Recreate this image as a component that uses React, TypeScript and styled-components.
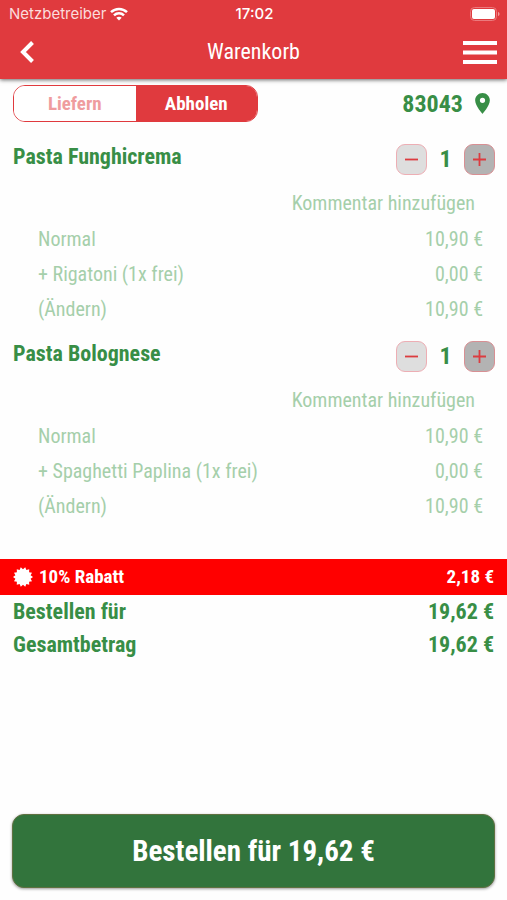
import React, { useState } from "react";
import styled, { createGlobalStyle, css } from "styled-components";

const red = "#e03a3e";
const green = "#388e46";
const paleGreen = "#a5cfaa";

const GlobalStyle = createGlobalStyle`
  *, *::before, *::after { box-sizing: border-box; }
  body {
    margin: 0;
    background: #fefefe;
    font-family: "Roboto Condensed", Roboto, sans-serif;
  }
  button { font-family: inherit; cursor: pointer; }
`;

const Page = styled.div`
  min-height: 100vh;
  display: flex;
  flex-direction: column;
`;

const Header = styled.header`
  background: ${red};
  color: #fff;
  box-shadow: 0 1px 4px rgba(0, 0, 0, 0.6);
`;

const StatusBar = styled.div`
  display: grid;
  grid-template-columns: 1fr auto 1fr;
  align-items: center;
  height: 27px;
  padding: 0 7px 0 9px;
  font: 400 15px/20px Inter, sans-serif;
`;

const Carrier = styled.span`
  display: flex;
  align-items: center;
  gap: 4px;
  color: #fbdcdc;
`;

const Clock = styled.time`
  font-weight: 500;
`;

const Battery = styled.svg`
  justify-self: end;
`;

const NavBar = styled.div`
  display: grid;
  grid-template-columns: 1fr auto 1fr;
  align-items: center;
  height: 50px;
  margin-bottom: 2px;
  padding: 0 10px;
`;

const Title = styled.h1`
  margin: 0;
  font-size: 22px;
  line-height: 28px;
  font-weight: 400;
`;

const IconButton = styled.button<{ $end?: boolean }>`
  display: flex;
  padding: 0;
  border: 0;
  background: none;
  color: inherit;
  justify-self: ${(p) => (p.$end ? "end" : "start")};
`;

const Toolbar = styled.div`
  display: flex;
  align-items: center;
  justify-content: space-between;
  padding: 6px 13px 0;
`;

const Segments = styled.div`
  display: flex;
  width: 245px;
  height: 37px;
  overflow: hidden;
  border: 1px solid ${red};
  border-radius: 12px;
`;

const Segment = styled.button<{ $active: boolean }>`
  flex: 1;
  padding: 0;
  border: 0;
  font-size: 19px;
  line-height: 24px;
  font-weight: 700;
  background: ${(p) => (p.$active ? red : "#fff")};
  color: ${(p) => (p.$active ? "#fff" : "#ef9c9e")};
`;

const Postcode = styled.button`
  display: flex;
  align-items: center;
  gap: 12px;
  padding: 0 4px;
  border: 0;
  background: none;
  color: ${green};
  font-size: 24px;
  line-height: 28px;
  font-weight: 700;
`;

const Items = styled.main`
  padding: 8px 12px 35px 13px;
`;

const ItemHeader = styled.div`
  display: flex;
  align-items: center;
  justify-content: space-between;
  height: 55px;
  padding-top: 3px;
`;

const ItemName = styled.h2`
  margin: 0;
  padding-bottom: 4px;
  color: ${green};
  font-size: 22px;
  line-height: 28px;
  font-weight: 700;
`;

const Stepper = styled.div`
  display: flex;
  align-items: center;
`;

const StepButton = styled.button<{ $muted?: boolean }>`
  display: grid;
  place-items: center;
  width: 31px;
  height: 31px;
  padding: 0;
  border: 1px solid ${(p) => (p.$muted ? "#edaeb4" : "#d88f93")};
  border-radius: 9px;
  background: ${(p) => (p.$muted ? "#dedede" : "#b3b3b3")};
  color: #dc3c40;
`;

const Quantity = styled.output`
  width: 37px;
  text-align: center;
  color: ${green};
  font-size: 24px;
  line-height: 28px;
  font-weight: 700;
`;

const detailText = css`
  color: ${paleGreen};
  font-size: 20px;
  line-height: 35px;
  font-weight: 400;
`;

const CommentButton = styled.button`
  ${detailText}
  display: block;
  height: 37px;
  margin-left: auto;
  padding: 0 20px;
  border: 0;
  background: none;
`;

const DetailRow = styled.div`
  ${detailText}
  display: flex;
  justify-content: space-between;
  padding: 0 12px 0 25px;
`;

const EditButton = styled.button`
  ${detailText}
  padding: 0;
  border: 0;
  background: none;
`;

const Discount = styled.div`
  display: flex;
  align-items: center;
  justify-content: space-between;
  height: 36px;
  padding: 0 13px;
  background: #f00;
  color: #fff;
  font-size: 19px;
  line-height: 24px;
  font-weight: 700;
`;

const DiscountLabel = styled.span`
  display: flex;
  align-items: center;
  gap: 6px;
`;

const TotalRow = styled.div`
  display: flex;
  justify-content: space-between;
  padding: 0 13px;
  color: ${green};
  font-size: 22px;
  line-height: 33px;
  font-weight: 700;
`;

const Footer = styled.footer`
  margin-top: auto;
  padding: 12px;
`;

const OrderButton = styled.button`
  width: 100%;
  height: 74px;
  padding: 0;
  border: 1px solid #5f7140;
  border-radius: 12px;
  background: #32743c;
  box-shadow: 0 1px 3px rgba(0, 0, 0, 0.4);
  color: #fff;
  font-size: 29px;
  line-height: 36px;
  font-weight: 700;
`;

const WifiIcon = () => (
  <svg width="18" height="14" viewBox="0 0 18 14" fill="none" stroke="#fff" strokeWidth="2.5" aria-hidden="true">
    <path d="M1 5.200C5.500.8 12.500.8 17 5.200" />
    <path d="M4 8.300c2.800-2.700 7.200-2.700 10 0" />
    <path d="M9 13.500 6.300 10.700c1.500-1.400 3.900-1.400 5.400 0z" fill="#fff" stroke="none" />
  </svg>
);

const BatteryIcon = () => (
  <Battery width="30" height="14" viewBox="0 0 30 14" role="img" aria-label="Akku">
    <rect x=".5" y=".5" width="26" height="13" rx="4" fill="none" stroke="#eb7a7d" />
    <rect x="2" y="2" width="23" height="10" rx="2" fill="#fff" />
    <path d="M28 5c2 .5 2 3.500 0 4z" fill="#f19a9c" />
  </Battery>
);

const BackIcon = () => (
  <svg width="34" height="34" viewBox="0 0 34 34" fill="none" stroke="#fff" strokeWidth="4" aria-hidden="true">
    <path d="M22.500 7.500 13 17l9.500 9.500" />
  </svg>
);

const MenuIcon = () => (
  <svg width="34" height="23" viewBox="0 0 34 23" fill="#fff" aria-hidden="true">
    <path d="M0 0h34v4H0zM0 9.500h34v4H0zM0 19h34v4H0z" />
  </svg>
);

const PinIcon = () => (
  <svg width="15" height="21" viewBox="5 2 14 20" fill="currentColor" aria-hidden="true">
    <path d="M12 2C8.130 2 5 5.130 5 9c0 5.250 7 13 7 13s7-7.750 7-13c0-3.870-3.130-7-7-7zm0 9.500a2.500 2.500 0 0 1 0-5 2.500 2.500 0 0 1 0 5z" />
  </svg>
);

const SignIcon = ({ plus }: { plus?: boolean }) => (
  <svg width="15" height="15" viewBox="0 0 15 15" stroke="currentColor" strokeWidth="1.8" aria-hidden="true">
    <path d={plus ? "M1 7.500h13M7.500 1v13" : "M1 7.500h13"} />
  </svg>
);

const burstTeeth = 14;
const burstPoints = Array.from({ length: burstTeeth * 2 }, (_, i) => {
  const radius = i % 2 === 0 ? 10 : 7.8;
  const angle = ((i + 1) * Math.PI) / burstTeeth;
  return `${10 + radius * Math.sin(angle)},${10 - radius * Math.cos(angle)}`;
}).join(" ");

const BurstIcon = () => (
  <svg width="20" height="20" viewBox="0 0 20 20" fill="#fff" aria-hidden="true">
    <polygon points={burstPoints} />
  </svg>
);

const dishes = [
  { name: "Pasta Funghicrema", option: "+ Rigatoni (1x frei)" },
  { name: "Pasta Bolognese", option: "+ Spaghetti Paplina (1x frei)" },
];

function Dish({ name, option }: { name: string; option: string }) {
  const [count, setCount] = useState(1);
  return (
    <section>
      <ItemHeader>
        <ItemName>{name}</ItemName>
        <Stepper>
          <StepButton $muted aria-label={`${name} verringern`} onClick={() => setCount(Math.max(1, count - 1))}>
            <SignIcon />
          </StepButton>
          <Quantity>{count}</Quantity>
          <StepButton aria-label={`${name} erhöhen`} onClick={() => setCount(count + 1)}>
            <SignIcon plus />
          </StepButton>
        </Stepper>
      </ItemHeader>
      <CommentButton>Kommentar hinzufügen</CommentButton>
      <DetailRow>
        <span>Normal</span>
        <span>10,90 €</span>
      </DetailRow>
      <DetailRow>
        <span>{option}</span>
        <span>0,00 €</span>
      </DetailRow>
      <DetailRow>
        <EditButton>(Ändern)</EditButton>
        <span>10,90 €</span>
      </DetailRow>
    </section>
  );
}

export default function App() {
  const [mode, setMode] = useState("Abholen");
  return (
    <Page>
      <GlobalStyle />
      <Header>
        <StatusBar>
          <Carrier>
            Netzbetreiber
            <WifiIcon />
          </Carrier>
          <Clock>17:02</Clock>
          <BatteryIcon />
        </StatusBar>
        <NavBar>
          <IconButton aria-label="Zurück">
            <BackIcon />
          </IconButton>
          <Title>Warenkorb</Title>
          <IconButton $end aria-label="Menü">
            <MenuIcon />
          </IconButton>
        </NavBar>
      </Header>
      <Toolbar>
        <Segments role="group" aria-label="Bestellart">
          {["Liefern", "Abholen"].map((label) => (
            <Segment key={label} $active={mode === label} aria-pressed={mode === label} onClick={() => setMode(label)}>
              {label}
            </Segment>
          ))}
        </Segments>
        <Postcode>
          83043
          <PinIcon />
        </Postcode>
      </Toolbar>
      <Items>
        {dishes.map((dish) => (
          <Dish key={dish.name} {...dish} />
        ))}
      </Items>
      <Discount>
        <DiscountLabel>
          <BurstIcon />
          10% Rabatt
        </DiscountLabel>
        <span>2,18 €</span>
      </Discount>
      <TotalRow>
        <span>Bestellen für</span>
        <span>19,62 €</span>
      </TotalRow>
      <TotalRow>
        <span>Gesamtbetrag</span>
        <span>19,62 €</span>
      </TotalRow>
      <Footer>
        <OrderButton>Bestellen für 19,62 €</OrderButton>
      </Footer>
    </Page>
  );
}
